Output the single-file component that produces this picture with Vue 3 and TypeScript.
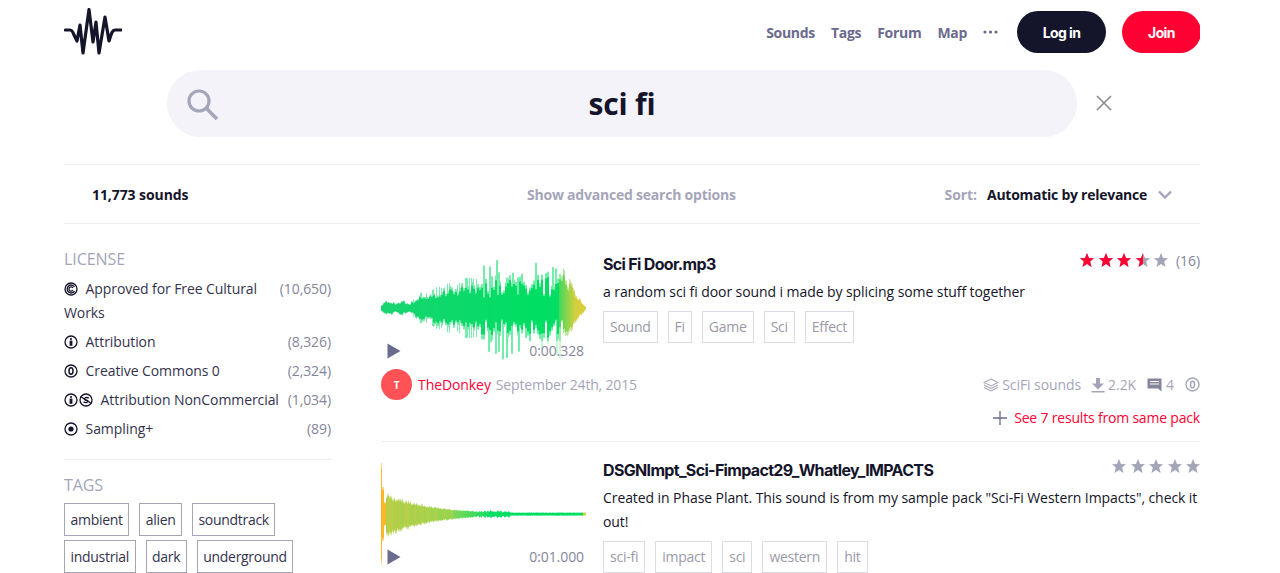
<script setup lang="ts">
type Bar = { x: number; t: number; b: number; it: number; ib: number; c: string };

function seeded(seed: number) {
  let s = seed;
  return () => {
    s = (s * 16807) % 2147483647;
    return s / 2147483647;
  };
}

function lerp(a: number[], b: number[], t: number) {
  const k = Math.max(0, Math.min(1, t));
  return `rgb(${a.map((v, i) => Math.round(v + (b[i] - v) * k)).join(',')})`;
}

const GREEN = [0, 222, 100];
const YELLOW = [214, 206, 60];
const OLIVE = [190, 205, 70];
const ORANGE = [255, 180, 40];

function env1(x: number): number {
  if (x < 30) return 3 + 3 * Math.abs(Math.sin(x / 4.5));
  if (x < 60) return 5 + ((x - 30) / 30) * 7 + 3 * Math.abs(Math.sin(x / 5));
  if (x < 100) return 12 + ((x - 60) / 40) * 8 + 3 * Math.abs(Math.sin(x / 6));
  if (x < 182) return 24 + ((x - 100) / 82) * 5;
  return Math.max(1, 30 * (1 - (x - 182) / 23));
}

function wave1(): Bar[] {
  const r = seeded(71);
  const out: Bar[] = [];
  let tJit = 1;
  let bJit = 1;
  let lastT = 0;
  let lastB = 0;
  for (let x = 0; x < 205; x++) {
    if (x % 2 === 0) {
      const amp = x > 100 && x < 182 ? 0.6 : 0.3;
      tJit = 1 - amp + r() * (amp + 0.15);
      bJit = 1 - amp + r() * (amp + 0.15);
    }
    const e = env1(x);
    const it = e * tJit;
    const ib = e * bJit;
    let t = it * 1.18;
    let b = ib * 1.18;
    if (x > 101 && x < 182) {
      if (lastT) { t = lastT; lastT = 0; }
      else if (r() > 0.8) { t = 30 + r() * 21; lastT = t; }
      if (lastB) { b = lastB; lastB = 0; }
      else if (r() > 0.8) { b = 30 + r() * 22; lastB = b; }
    } else if (x >= 30 && x <= 101 && r() > 0.78) {
      t = e * 1.5;
      b = e * 1.5;
    }
    const c = x < 178 ? lerp([24, 212, 112], GREEN, x / 150) : lerp([70, 218, 92], YELLOW, (x - 178) / 16);
    out.push({ x, t, b, it, ib, c });
  }
  return out;
}

function wave2(): Bar[] {
  const r = seeded(913);
  const out: Bar[] = [];
  for (let x = 0; x < 205; x++) {
    const p = x / 205;
    let env: number;
    if (x < 1) env = 51;
    else if (x < 3) env = 27;
    else if (x < 5) env = 12;
    else if (x < 92) env = 24 * Math.exp(-p * 4.5);
    else if (x < 129) env = 2 + r() * 2;
    else env = 1.5;
    const up = x < 5 ? env : env * (0.8 + r() * 0.2);
    const dn = x < 5 ? env : env * (0.95 + r() * 0.2);
    let c: string;
    if (x < 5) c = lerp(ORANGE, ORANGE, 0);
    else if (p < 0.35) c = lerp(OLIVE, [150, 212, 80], p / 0.35 + (r() - 0.5) * 0.8);
    else if (p < 0.55) c = lerp([130, 215, 85], GREEN, (p - 0.35) * 5);
    else c = x > 201 ? lerp(GREEN, YELLOW, 1) : lerp(GREEN, GREEN, 0);
    out.push({ x, t: up, b: dn, it: up * 0.88, ib: dn * 0.88, c });
  }
  return out;
}

const licenses = [
  { icon: 'fc', name: 'Approved for Free Cultural Works', n: '(10,650)' },
  { icon: 'by', name: 'Attribution', n: '(8,326)' },
  { icon: 'zero', name: 'Creative Commons 0', n: '(2,324)' },
  { icon: 'bync', name: 'Attribution NonCommercial', n: '(1,034)' },
  { icon: 'samp', name: 'Sampling+', n: '(89)' },
];
const sideTags = [
  ['ambient', 'alien', 'soundtrack'],
  ['industrial', 'dark', 'underground'],
];

const sounds = [
  {
    title: 'Sci Fi Door.mp3',
    desc: 'a random sci fi door sound i made by splicing some stuff together',
    tags: ['Sound', 'Fi', 'Game', 'Sci', 'Effect'],
    time: '0:00.328',
    bars: wave1(),
    mid: 51,
    fill: 3.5,
    count: '(16)',
    user: 'TheDonkey',
    date: 'September 24th, 2015',
    full: true,
  },
  {
    title: 'DSGNImpt_Sci-Fimpact29_Whatley_IMPACTS',
    desc: 'Created in Phase Plant. This sound is from my sample pack "Sci-Fi Western Impacts", check it out!',
    tags: ['sci-fi', 'impact', 'sci', 'western', 'hit'],
    time: '0:01.000',
    bars: wave2(),
    mid: 51,
    fill: 0,
    count: '',
    user: '',
    date: '',
    full: false,
  },
];
const starPts = '7,0 9,5 14,5.300 10.200,8.600 11.500,14 7,11 2.500,14 3.800,8.600 0,5.300 5,5';
</script>

<template>
  <div class="page">
    <header class="top">
      <svg class="logo" viewBox="0 0 58 48" width="58" height="48" aria-hidden="true">
        <path d="M1.500 22 H6 C8 22 9 24 10 27 L13 33 L16 17 L19 45 L25 1.500 L29 34 L32 14 L35 45 L41 9 L45 33 C47 27 48 22 51 22 H57" fill="none" stroke="#14142a" stroke-width="3.200" stroke-linecap="round" stroke-linejoin="round" />
      </svg>
      <nav class="nav">
        <a>Sounds</a><a>Tags</a><a>Forum</a><a>Map</a>
        <svg class="dots" width="15" height="4" viewBox="0 0 15 4" aria-hidden="true">
          <circle cx="2" cy="2" r="1.600" /><circle cx="7.500" cy="2" r="1.600" /><circle cx="13" cy="2" r="1.600" />
        </svg>
        <button class="btn dark">Log in</button>
        <button class="btn red">Join</button>
      </nav>
    </header>

    <div class="search-row">
      <div class="search">
        <svg class="glass" width="34" height="34" viewBox="0 0 34 34" aria-hidden="true">
          <circle cx="13" cy="13" r="10" fill="none" stroke="#a5a5b9" stroke-width="3.200" />
          <path d="M20.500 20.500 L31 31" stroke="#a5a5b9" stroke-width="3.600" fill="none" />
        </svg>
        <span class="query">sci fi</span>
      </div>
      <svg class="clear" width="16" height="16" viewBox="0 0 16 16" aria-hidden="true">
        <path d="M1 1 L15 15 M15 1 L1 15" stroke="#85858f" stroke-width="1.500" fill="none" />
      </svg>
    </div>

    <div class="bar">
      <b class="count">11,773 sounds</b>
      <a class="adv">Show advanced search options</a>
      <div class="sort">
        <span class="sort-l">Sort:</span>
        <b>Automatic by relevance</b>
        <svg width="14" height="9" viewBox="0 0 14 9" aria-hidden="true">
          <path d="M1 1.500 L7 7.500 L13 1.500" stroke="#a5a5b9" stroke-width="2.400" fill="none" />
        </svg>
      </div>
    </div>

    <div class="content">
      <aside class="side">
        <h3 class="side-h">LICENSE</h3>
        <ul class="lic">
          <li v-for="l in licenses" :key="l.name" class="lic-row">
            <span class="lic-name">
              <svg v-if="l.icon === 'fc'" class="ci" width="14" height="14" viewBox="0 0 14 14"><circle cx="7" cy="7" r="6" /><path d="M10.500 4.800 A4 4 0 1 0 10.500 9.200" /><path d="M9 5.800 A2.200 2.200 0 1 0 9 8.200" /></svg>
              <svg v-else-if="l.icon === 'by'" class="ci" width="14" height="14" viewBox="0 0 14 14"><circle cx="7" cy="7" r="6" /><circle cx="7" cy="4" r="1.100" class="solid" /><rect x="5.600" y="5.600" width="2.800" height="5.200" class="solid" /></svg>
              <svg v-else-if="l.icon === 'zero'" class="ci" width="14" height="14" viewBox="0 0 14 14"><circle cx="7" cy="7" r="6" /><ellipse cx="7" cy="7" rx="2" ry="3.200" stroke-width="1.500" /></svg>
              <template v-else-if="l.icon === 'bync'">
                <svg class="ci" width="14" height="14" viewBox="0 0 14 14"><circle cx="7" cy="7" r="6" /><circle cx="7" cy="4" r="1.100" class="solid" /><rect x="5.600" y="5.600" width="2.800" height="5.200" class="solid" /></svg>
                <svg class="ci second" width="14" height="14" viewBox="0 0 14 14"><circle cx="7" cy="7" r="6" /><path d="M1.500 3.500 L12.500 10.500" /><path d="M9.800 5.200 C8 3.800 4.800 4.800 5.500 6.500 C6 7.700 8.800 6.800 9 8.200 C9.200 9.700 6 10 4.500 8.800" /></svg>
              </template>
              <svg v-else class="ci" width="14" height="14" viewBox="0 0 14 14"><circle cx="7" cy="7" r="6" /><circle cx="7" cy="7" r="2.600" class="solid" /></svg>
              {{ l.name }}
            </span>
            <span class="lic-n">{{ l.n }}</span>
          </li>
        </ul>
        <hr class="side-hr" />
        <h3 class="side-h">TAGS</h3>
        <div v-for="(row, i) in sideTags" :key="i" class="side-tags">
          <a v-for="t in row" :key="t" class="stag">{{ t }}</a>
        </div>
      </aside>

      <main class="list">
        <article v-for="s in sounds" :key="s.title" class="sound" :class="{ full: s.full }">
          <div class="player">
            <svg class="wave" width="205" height="104" viewBox="0 0 205 104" aria-hidden="true">
              <g v-for="b in s.bars" :key="b.x">
                <rect :x="b.x" :y="s.mid - b.t" width="1" :height="b.t + b.b" :fill="b.c" opacity="0.55" />
                <rect :x="b.x" :y="s.mid - b.it" width="1" :height="b.it + b.ib" :fill="b.c" />
              </g>
            </svg>
            <svg class="play" width="14" height="16" viewBox="0 0 14 16" aria-hidden="true"><path d="M0.500 0.500 L13.500 8 L0.500 15.500 Z" fill="#6b6b8d" /></svg>
            <span class="time">{{ s.time }}</span>
          </div>
          <div class="info">
            <div class="title-row">
              <h2 class="title">{{ s.title }}</h2>
              <div class="rating">
                <span class="stars">
                  <svg v-for="n in 5" :key="n" width="14" height="14" viewBox="0 0 14 14" aria-hidden="true">
                    <polygon :points="starPts" fill="#a5a5b9" />
                    <polygon v-if="n <= s.fill" :points="starPts" fill="#ff0033" />
                    <polygon v-else-if="n - 0.5 <= s.fill" :points="starPts" fill="#ff0033" class="half" />
                  </svg>
                </span>
                <span v-if="s.count" class="cnt">{{ s.count }}</span>
              </div>
            </div>
            <p class="desc">{{ s.desc }}</p>
            <div class="tags"><a v-for="t in s.tags" :key="t" class="tag">{{ t }}</a></div>
          </div>
          <div v-if="s.full" class="meta">
            <div class="who">
              <span class="avatar">T</span>
              <a class="user">{{ s.user }}</a>
              <span class="date">{{ s.date }}</span>
            </div>
            <div class="stats">
              <svg width="16" height="14" viewBox="0 0 16 14" fill="none" stroke="#a5a5b9" stroke-width="1.100" aria-hidden="true">
                <path d="M8 1 L15 4.500 L8 8 L1 4.500 Z" /><path d="M1 7 L8 10.500 L15 7" /><path d="M1 9.500 L8 13 L15 9.500" />
              </svg>
              <span class="pack">SciFi sounds</span>
              <svg class="dl" width="14" height="16" viewBox="0 0 14 16" aria-hidden="true">
                <path d="M5 1 H9 V6.500 H13 L7 12.500 L1 6.500 H5 Z M0.500 14 H13.500 V15.500 H0.500 Z" fill="#a5a5b9" />
              </svg>
              <span>2.2K</span>
              <svg class="cm" width="15" height="14" viewBox="0 0 15 14" aria-hidden="true">
                <path d="M0.500 0.500 H14.500 V13.500 L11 10.500 H0.500 Z" fill="#85859b" /><path d="M3 3.500 H12 M3 6 H12" stroke="#fff" stroke-width="1.200" />
              </svg>
              <span>4</span>
              <svg class="lc" width="15" height="15" viewBox="0 0 15 15" fill="none" stroke="#a5a5b9" aria-hidden="true">
                <circle cx="7.500" cy="7.500" r="6.500" stroke-width="1.400" /><ellipse cx="7.500" cy="7.500" rx="2" ry="3.300" stroke-width="1.500" />
              </svg>
            </div>
            <div class="more">
              <svg width="14" height="14" viewBox="0 0 14 14" aria-hidden="true"><path d="M7 0 V14 M0 7 H14" stroke="#6b6b8d" stroke-width="1.300" /></svg>
              <a>See 7 results from same pack</a>
            </div>
          </div>
        </article>
      </main>
    </div>
  </div>
</template>

<style>
html, body { margin: 0; padding: 0; background: #fff; height: 573px; overflow: hidden; }
</style>

<style scoped>
.page { width: 1136px; margin-left: 64px; font-family: "Open Sans", "Noto Sans", sans-serif; font-size: 14px; letter-spacing: -0.08px; color: #14142a; height: 573px; overflow: hidden; }
a { cursor: pointer; }
.top { display: flex; justify-content: space-between; align-items: flex-start; height: 70px; }
.logo { margin-top: 8px; }
.nav { display: flex; align-items: center; margin-top: 11px; font-family: "Open Sans", sans-serif; font-weight: 700; color: #6b6b8d; }
.nav a { margin-right: 16px; font-size: 14px; letter-spacing: -0.3px; }
.dots { fill: #6b6b8d; margin-right: 19px; }
.btn { height: 42px; border: 0; border-radius: 21px; color: #fff; font: 700 14px Inter, sans-serif; letter-spacing: -0.6px; padding: 0; margin: 0; }
.dark { width: 89px; background: #14142a; margin-right: 16px; }
.red { width: 79px; background: #ff0033; margin-right: -1px; }
.search-row { display: flex; align-items: center; padding-left: 103px; }
.search { position: relative; width: 910px; height: 67px; border-radius: 34px; background: #f3f3f9; display: flex; align-items: center; justify-content: center; }
.glass { position: absolute; left: 19px; top: 18px; }
.query { font: 700 30px "Open Sans", sans-serif; letter-spacing: -0.2px; }
.clear { margin: 0 0 2px 19px; }
.bar { position: relative; display: flex; justify-content: space-between; align-items: center; height: 58px; margin-top: 27px; border-top: 1px solid #eeeef2; border-bottom: 1px solid #eeeef2; padding: 0 28px; font-family: "Open Sans", sans-serif; font-weight: 700; }
.count { font-weight: 700; }
.adv { position: absolute; left: 463px; color: #a5a5b9; letter-spacing: -0.22px; }
.sort { display: flex; align-items: center; gap: 10px; }
.sort b { font-weight: 700; letter-spacing: -0.26px; }
.sort-l { color: #a5a5b9; }
.sort svg { margin-left: 1px; }
.content { display: flex; padding-top: 23px; gap: 49px; }
.side { width: 268px; flex: none; }
.side-h { margin: 0 0 6px; font-size: 16px; font-weight: 400; line-height: 24px; color: #a5a5b9; }
.lic { list-style: none; margin: 6px 0 0; padding: 0; }
.lic-row { display: flex; justify-content: space-between; line-height: 24px; margin-bottom: 5px; color: #33334d; }
.lic-name { display: block; width: 225px; }
.lic-n { color: #85859b; margin-right: 1px; }
.ci { vertical-align: -2px; margin-right: 4px; fill: none; stroke: #14142a; stroke-width: 1.300; }
.ci .solid { fill: #14142a; stroke: none; }
.second { margin-left: -3px; }
.side-hr { margin: 18px 0 13px; border: 0; border-top: 1px solid #eeeef2; }
.side-tags { display: flex; gap: 10px; margin-top: 4px; }
.stag { display: block; border: 1px solid #a5a5b9; padding: 0 5.500px; line-height: 31px; color: #33334d; letter-spacing: -0.3px; }
.list { flex: 1; min-width: 0; }
.sound { position: relative; display: grid; grid-template-columns: 205px 1fr; column-gap: 17px; align-content: start; }
.sound.full { box-sizing: border-box; height: 195px; border-bottom: 1px solid #eeeef2; margin-bottom: 21px; padding-top: 10px; }
.player { position: relative; height: 104px; }
.wave { display: block; }
.play { position: absolute; left: 6px; top: 86px; }
.time { position: absolute; right: 2px; top: 84px; color: #85859b; line-height: 20px; background: rgba(255, 255, 255, 0.6); }
.info { min-width: 0; margin-top: -5px; }
.title-row { display: flex; justify-content: space-between; align-items: flex-start; }
.title { margin: 0; font: 700 16px/24px Inter, sans-serif; letter-spacing: -0.67px; }
.rating { display: flex; align-items: center; gap: 8px; height: 24px; margin-top: -4px; }
.stars { display: flex; gap: 4.500px; }
.stars svg { display: block; }
.half { clip-path: inset(0 50% 0 0); }
.cnt { color: #85859b; }
.desc { margin: 4px 0 0; line-height: 24px; }
.tags { display: flex; gap: 10px; margin-top: 7px; }
.tag { border: 1px solid #dcdce6; padding: 0 6px; line-height: 30px; color: #9a9aa8; letter-spacing: -0.25px; }
.meta { grid-column: 1 / 3; display: grid; grid-template-columns: 1fr auto; margin-top: 8px; }
.who { display: flex; align-items: center; gap: 5px; height: 31px; }
.avatar { width: 31px; height: 31px; border-radius: 50%; background: #ff5257; color: #fff; font-weight: 700; font-size: 10px; display: flex; align-items: center; justify-content: center; margin-right: 1px; }
.user { color: #ff0033; }
.date { color: #a5a5b9; letter-spacing: -0.18px; }
.stats { display: flex; align-items: center; color: #a5a5b9; }
.pack { margin-left: 3px; }
.dl { margin: 0 3px 0 10px; }
.cm { margin: 0 4px 0 11px; }
.lc { margin-left: 11px; }
.more { grid-column: 2; display: flex; align-items: center; justify-content: flex-end; gap: 7px; margin-top: 8px; }
.more a { color: #ff0033; letter-spacing: -0.19px; }
</style>
